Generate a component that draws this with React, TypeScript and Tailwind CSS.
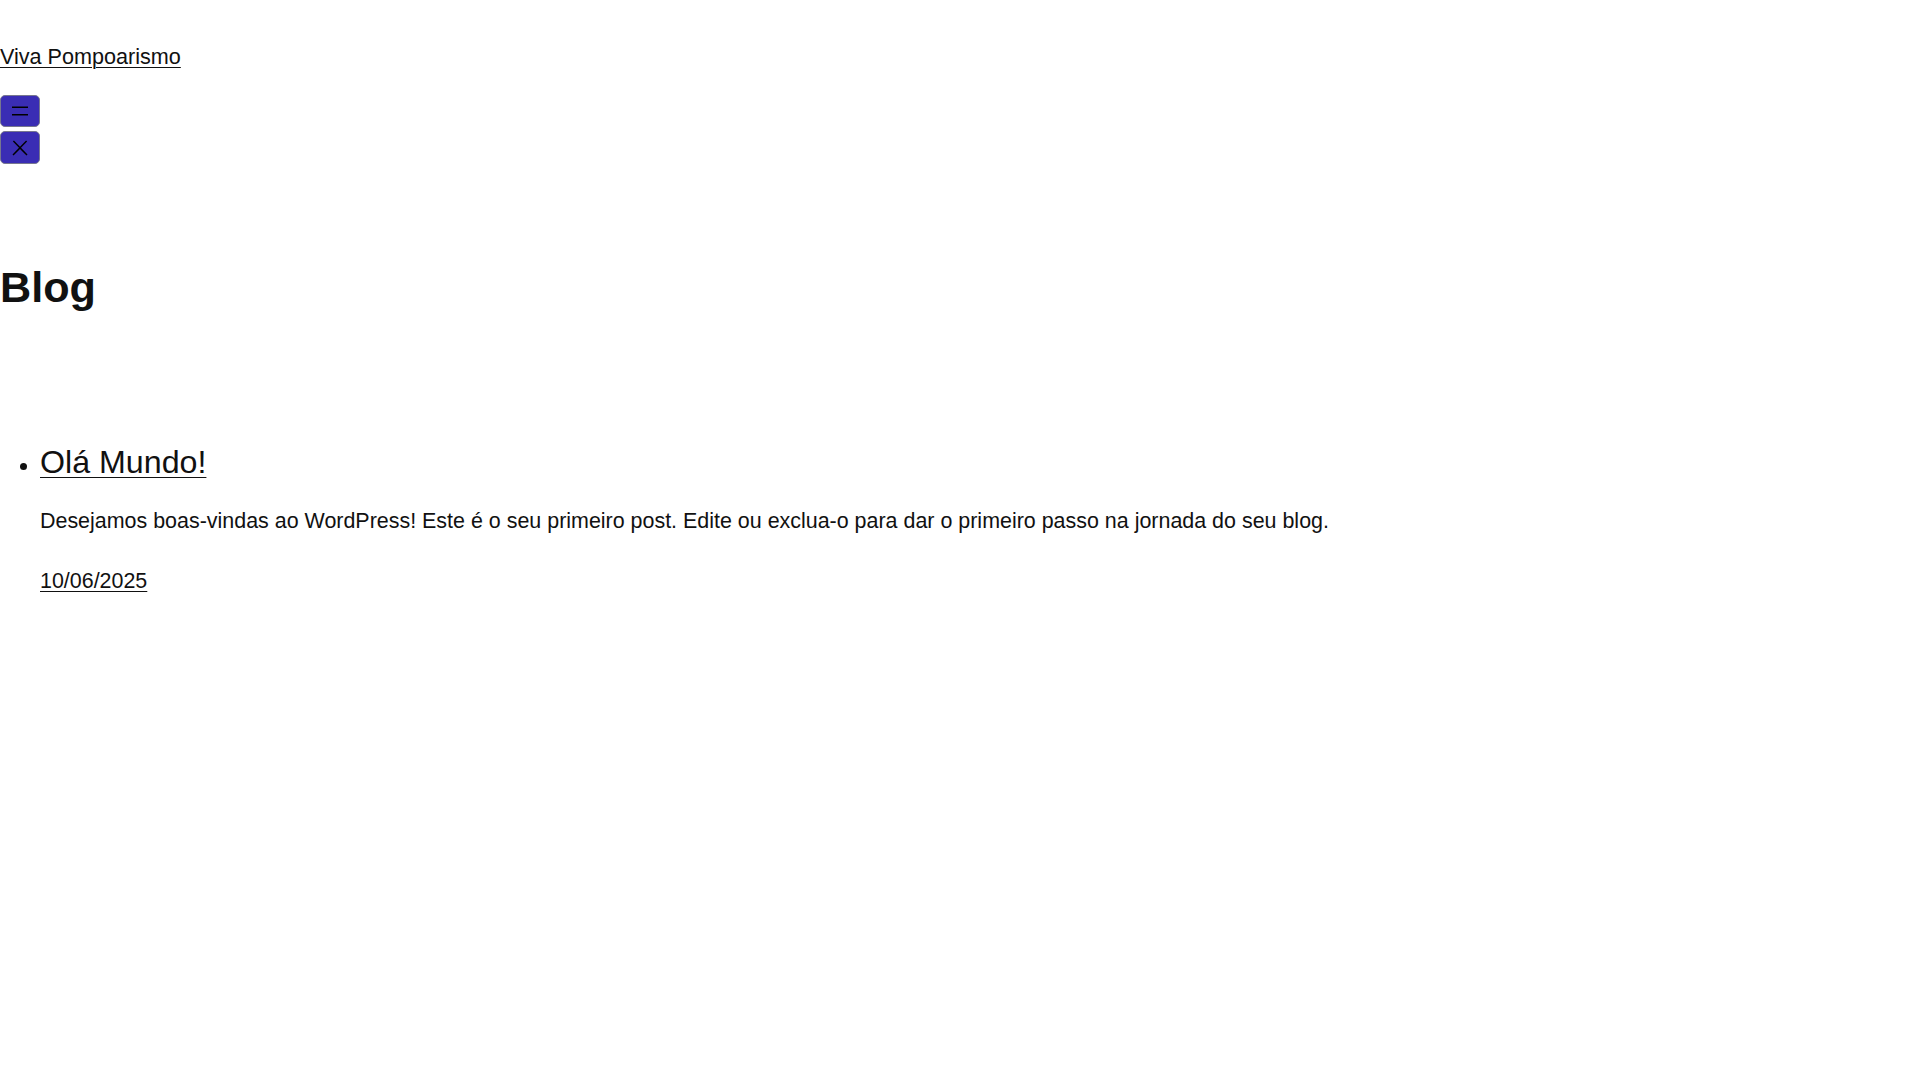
export default function App() {
  return (
    <div className="min-h-screen bg-white text-[#111111] font-['Liberation_Sans',Arial,sans-serif] text-[21.6px]">
      <header className="pt-[44px]">
        <p className="leading-[25px]">
          <a href="#" className="underline decoration-[1px] underline-offset-[3px]">
            Viva Pompoarismo
          </a>
        </p>
        <nav className="mt-[26px] flex flex-col items-start gap-[4px]">
          <button className="w-[40px] h-[32px] flex items-center justify-center bg-[#3a2db4] border border-[#77778f] rounded-[5px] text-black">
            <svg width="24" height="24" viewBox="0 0 24 24" fill="currentColor">
              <rect x="4" y="7.5" width="16" height="1.5" />
              <rect x="4" y="15" width="16" height="1.5" />
            </svg>
          </button>
          <button className="w-[40px] h-[33px] flex items-center justify-center bg-[#3a2db4] border border-[#77778f] rounded-[5px] text-black">
            <svg width="24" height="24" viewBox="0 0 24 24" fill="currentColor">
              <path d="M13 11.8l6.1-6.3-1-1-6.1 6.2-6.1-6.2-1 1 6.1 6.3-6.5 6.7 1 1 6.5-6.6 6.5 6.6 1-1z" />
            </svg>
          </button>
        </nav>
      </header>

      <main className="mt-[98px]">
        <h1 className="text-[43.2px] leading-[50px] font-bold">Blog</h1>

        <ul className="mt-[132px] list-disc pl-[40px]">
          <li>
            <h2 className="text-[32.2px] leading-[37px]">
              <a href="#" className="underline decoration-[1px] underline-offset-[4px]">
                Olá Mundo!
              </a>
            </h2>
            <p className="mt-[28px] leading-[25px] text-[21.45px]">
              Desejamos boas-vindas ao WordPress! Este é o seu primeiro post. Edite ou exclua-o para dar o primeiro passo na jornada do seu blog.
            </p>
            <p className="mt-[35px] leading-[25px] text-[21.45px]">
              <a href="#" className="underline decoration-[1px] underline-offset-[3px]">
                10/06/2025
              </a>
            </p>
          </li>
        </ul>
      </main>
    </div>
  );
}
